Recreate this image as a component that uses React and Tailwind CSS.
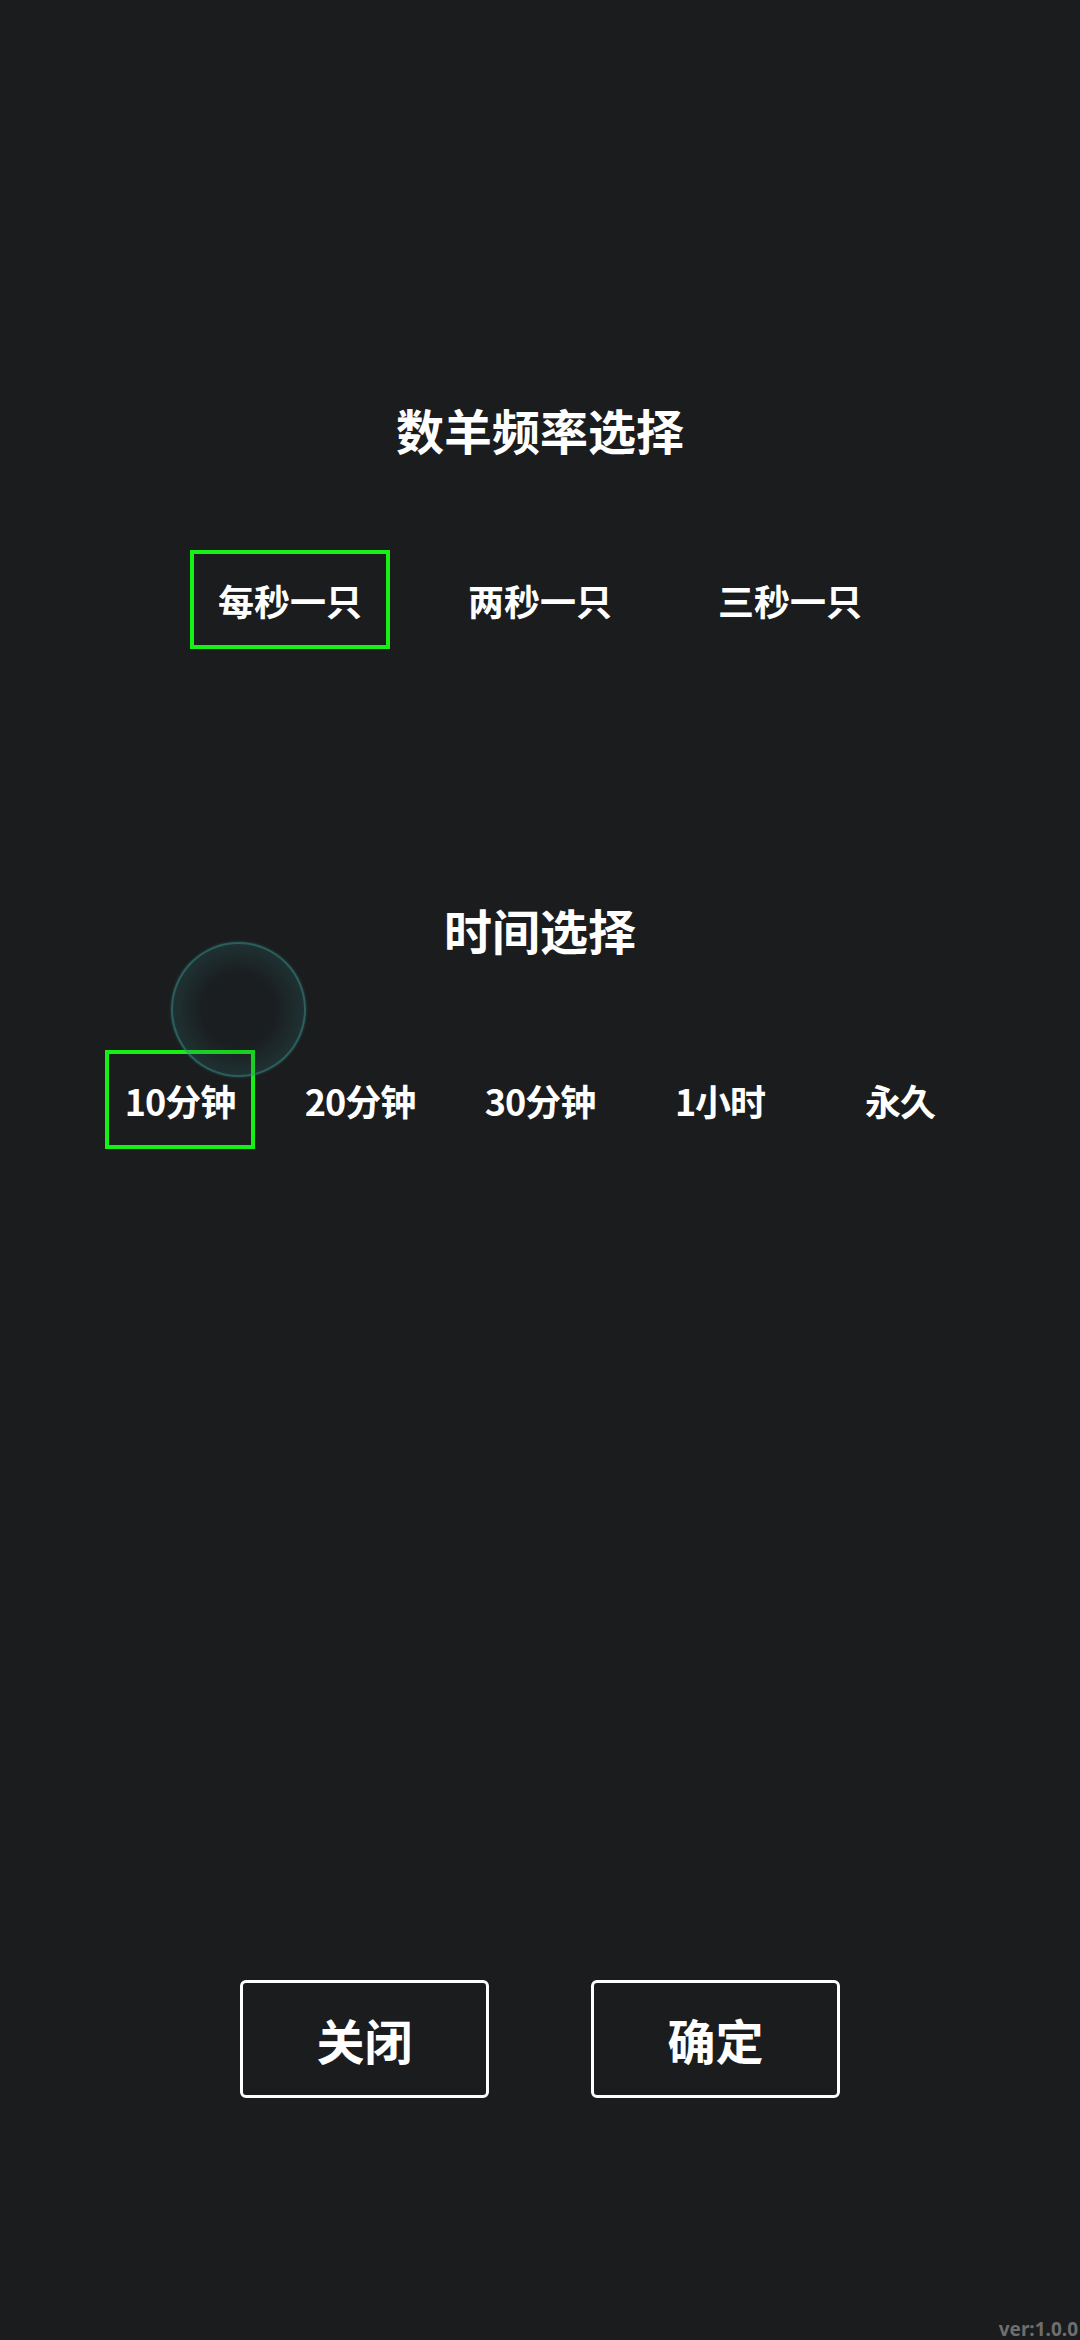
import React, { useState } from "react";

const rates = ["每秒一只", "两秒一只", "三秒一只"];
const durations = ["10分钟", "20分钟", "30分钟", "1小时", "永久"];

const cjk = "font-['Noto_Sans_CJK_SC','Noto_Sans',sans-serif]";

const App = () => {
  const [rate, setRate] = useState(0);
  const [duration, setDuration] = useState(0);

  return (
    <div
      className={`relative w-full h-[2340px] bg-[#1b1c1e] text-white flex flex-col items-center pt-[405px] overflow-hidden ${cjk}`}
    >
      <h1 className="text-[48px] leading-none font-bold">数羊频率选择</h1>

      <div className="mt-[97px] flex gap-[50px]">
        {rates.map((label, i) => (
          <button
            key={label}
            onClick={() => setRate(i)}
            className={`w-[200px] h-[99px] flex items-center justify-center border-4 text-[36px] leading-none font-bold ${
              rate === i ? "border-[#17f017]" : "border-transparent"
            }`}
          >
            {label}
          </button>
        ))}
      </div>

      <h2 className="mt-[256px] text-[48px] leading-none font-bold">时间选择</h2>

      <div className="mt-[97px] flex gap-[30px]">
        {durations.map((label, i) => (
          <button
            key={label}
            onClick={() => setDuration(i)}
            className={`w-[150px] h-[99px] flex items-center justify-center border-4 text-[36px] leading-none font-bold tracking-[-1px] ${
              duration === i ? "border-[#17f017]" : "border-transparent"
            }`}
          >
            {label}
          </button>
        ))}
      </div>

      {/* touch ripple left on screen */}
      <div className="absolute left-[171px] top-[942px] w-[135px] h-[135px] rounded-full border-2 border-[rgba(60,150,145,0.45)] bg-[radial-gradient(circle,rgba(30,50,52,0.15)_40%,rgba(45,125,122,0.4)_100%)] shadow-[0_0_3px_rgba(60,150,145,0.4)]" />

      <div className="mt-[831px] flex gap-[102px]">
        <button className="w-[249px] h-[118px] border-[3px] border-white rounded-[6px] flex items-center justify-center text-[48px] leading-none font-bold">
          关闭
        </button>
        <button className="w-[249px] h-[118px] border-[3px] border-white rounded-[6px] flex items-center justify-center text-[48px] leading-none font-bold">
          确定
        </button>
      </div>

      <div className="mt-auto self-end pr-[2px] text-[19px] leading-[22px] font-bold text-[#6e6e6e] font-['Noto_Sans',sans-serif]">
        ver:1.0.0
      </div>
    </div>
  );
};

export default App;
